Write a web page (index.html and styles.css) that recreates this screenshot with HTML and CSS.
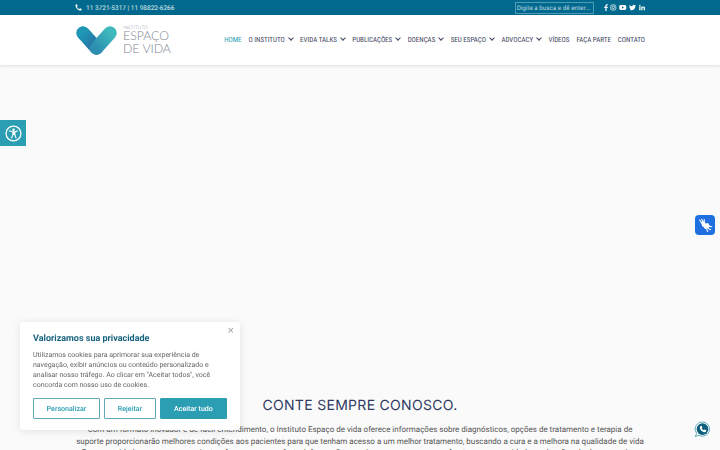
FILE: index.html
```html
<!DOCTYPE html>
<html lang="pt-BR">
<head>
    <meta charset="UTF-8">
    <title>Instituto Espaço de Vida</title>
    <link rel="stylesheet" href="styles.css">
</head>
<body>
    <!-- Top bar -->
    <div class="topbar">
        <div class="container topbar-inner">
            <div class="phone">
                <svg class="phone-icon" viewBox="0 0 24 24"><path fill="#fff" d="M23 17.500l-6-2.800-2.800 3.200c-3.500-1.700-6.400-4.600-8.100-8.100l3.200-2.800L6.500 1 1.500 2.500C1.500 14 10 22.500 21.500 22.500z"/></svg>
                <span>11 3721-5317 | 11 98822-6266</span>
            </div>
            <div class="topbar-right">
                <input class="search" type="text" placeholder="Digite a busca e dê enter...">
                <div class="social">
                    <svg viewBox="0 0 14 24" class="social-f"><path fill="#fff" d="M9 24V13.500h3.700l.6-4.300H9V6.500c0-1.200.5-2.100 2.200-2.100h2.300V.6C12.900.5 11.700.4 10.400.4 7 .4 4.800 2.400 4.800 6v3.200H1v4.300h3.800V24z"/></svg>
                    <svg class="social-ig" viewBox="0 0 24 24"><rect x="2.500" y="2.500" width="19" height="19" rx="5.500" fill="none" stroke="#fff" stroke-width="2.600"/><circle cx="12" cy="12" r="4.500" fill="none" stroke="#fff" stroke-width="2.600"/><circle cx="17.500" cy="6.500" r="1.400" fill="#fff"/></svg>
                    <svg class="social-yt" viewBox="0 0 24 24"><rect x="0" y="3.500" width="24" height="17" rx="5" fill="#fff"/><path fill="#00698d" d="M9.500 8v8l6.500-4z"/></svg>
                    <svg class="social-tw" viewBox="0 0 24 24"><path fill="#fff" d="M23.500 5c-.9.400-1.800.6-2.800.8 1-.6 1.800-1.500 2.100-2.700-.9.600-2 1-3 1.200a4.800 4.800 0 0 0-8.200 4.400C7.700 8.500 4.200 6.600 1.800 3.700.5 5.900 1.200 8.700 3.300 10.100c-.8 0-1.500-.2-2.200-.6 0 2.300 1.600 4.300 3.900 4.800-.7.200-1.500.2-2.200.1.600 1.900 2.400 3.300 4.500 3.300A9.700 9.700 0 0 1 .5 19.700c2.200 1.400 4.700 2.100 7.400 2.100 9 0 14-7.600 13.700-14.300 1-.7 1.800-1.500 1.900-2.500z"/></svg>
                    <svg class="social-in" viewBox="0 0 24 24"><path fill="#fff" d="M1 8h5v15H1zM3.500 1a2.800 2.800 0 1 1 0 5.600 2.800 2.800 0 0 1 0-5.600zM9 8h4.700v2.100C14.400 8.800 16 7.600 18.400 7.600c5 0 5.600 3.200 5.600 7.400v8h-5v-7c0-1.700 0-3.800-2.400-3.800S14 14 14 15.900V23H9z"/></svg>
                </div>
            </div>
        </div>
    </div>

    <!-- Header -->
    <header class="header">
        <div class="container header-inner">
            <a class="logo" href="#">
                <svg class="logo-mark" viewBox="0 0 41 29">
                    <defs>
                        <linearGradient id="band-left" x1="0" y1="0" x2="1" y2="1">
                            <stop offset="0" stop-color="#1f97b4"/>
                            <stop offset="1" stop-color="#2b6aa0"/>
                        </linearGradient>
                        <linearGradient id="band-right" x1="1" y1="0" x2="0" y2="1">
                            <stop offset="0" stop-color="#3fb9bd"/>
                            <stop offset="1" stop-color="#2c8fb0"/>
                        </linearGradient>
                    </defs>
                    <path d="M7 7L20.500 22" fill="none" stroke="url(#band-left)" stroke-width="13.500" stroke-linecap="round"/>
                    <path d="M34 7L20.500 22" fill="none" stroke="url(#band-right)" stroke-width="13.500" stroke-linecap="round"/>
                </svg>
                <div class="logo-text">
                    <span class="logo-small">INSTITUTO</span>
                    <span class="logo-big">ESPAÇO</span>
                    <span class="logo-big">DE VIDA</span>
                </div>
            </a>
            <nav class="nav">
                <a class="nav-link active" href="#">HOME</a>
                <a class="nav-link caret" href="#">O INSTITUTO</a>
                <a class="nav-link caret" href="#">EVIDA TALKS</a>
                <a class="nav-link caret" href="#">PUBLICAÇÕES</a>
                <a class="nav-link caret" href="#">DOENÇAS</a>
                <a class="nav-link caret" href="#">SEU ESPAÇO</a>
                <a class="nav-link caret" href="#">ADVOCACY</a>
                <a class="nav-link" href="#">VÍDEOS</a>
                <a class="nav-link" href="#">FAÇA PARTE</a>
                <a class="nav-link" href="#">CONTATO</a>
            </nav>
        </div>
    </header>

    <!-- Main -->
    <main class="main">
        <div class="hero"></div>
        <section class="about container">
            <h1>CONTE SEMPRE CONOSCO.</h1>
            <p>Com um formato inovador e de fácil entendimento, o Instituto Espaço de vida oferece informações sobre diagnósticos, opções de tratamento e terapia de suporte proporcionarão melhores condições aos pacientes para que tenham acesso a um melhor tratamento, buscando a cura e a melhora na qualidade de vida<br>Para os cuidadores e para os pacientes, fornecemos conforto, informação e apoio, para que possam enfrentar com serenidade os desafios da doença e viver melhor.</p>
        </section>
    </main>

    <!-- Floating widgets -->
    <a class="a11y" href="#">
        <svg viewBox="0 0 24 24"><circle cx="12" cy="12" r="10.500" fill="none" stroke="#fff" stroke-width="1.800"/><circle cx="12" cy="6.800" r="1.800" fill="#fff"/><path fill="#fff" d="M5.500 8.800l.4-1.300 4.300 1.200h3.600l4.300-1.200.4 1.300-3.800 1.300v3.400l1.800 5.200-1.300.5-2-5h-1.400l-2 5-1.300-.5 1.800-5.200v-3.400z"/></svg>
    </a>
    <a class="libras" href="#">
        <svg viewBox="0 0 20 20">
            <g fill="none" stroke="#fff" stroke-linecap="round">
                <path stroke-width="1.300" d="M5 6L3 3.500M7 5.500L5.500 2.500M8.500 5.500V3"/>
                <path stroke-width="1.300" d="M14.500 11l3 .5M13.500 13.500l2.500 1.500M11.500 14.500l1 2.500"/>
            </g>
            <path fill="#fff" d="M4 6.500l4.500-1.500 1.500 2.500 3-.5 2 3-1.500 3.500-4 .5-2-2.500-1.500-.5-.5-2.500z"/>
        </svg>
    </a>
    <a class="whats" href="#">
        <svg viewBox="0 0 20 20"><path fill="#fff" stroke="#1b7f9a" stroke-width=".8" d="M10 1.200a8.300 8.300 0 0 1 0 16.600c-1.500 0-2.900-.4-4.100-1.100l-4.200 1.600 1.300-3.900A8.300 8.300 0 0 1 10 1.200z"/><circle cx="10" cy="9.500" r="6.900" fill="#0f5f7c"/><path fill="#fff" d="M7.800 5.800l1.200-.3.900 2.200-.8.900c.5 1 1.300 1.800 2.300 2.300l.9-.8 2.200.9-.3 1.300c-.4.800-1.500 1.100-2.400.9-2.500-.6-4.300-2.400-4.900-4.900-.2-.9.100-2 .9-2.500z"/></svg>
    </a>

    <!-- Cookie notice -->
    <div class="cookie">
        <button class="cookie-close" type="button">×</button>
        <h2>Valorizamos sua privacidade</h2>
        <p>Utilizamos cookies para aprimorar sua experiência de navegação, exibir anúncios ou conteúdo personalizado e analisar nosso tráfego. Ao clicar em "Aceitar todos", você concorda com nosso uso de cookies.</p>
        <div class="cookie-buttons">
            <button class="btn btn-custom" type="button">Personalizar</button>
            <button class="btn btn-reject" type="button">Rejeitar</button>
            <button class="btn btn-accept" type="button">Aceitar tudo</button>
        </div>
    </div>
</body>
</html>
```

FILE: styles.css
```css
* {
    box-sizing: border-box;
    margin: 0;
    padding: 0;
}

html, body {
    height: 100%;
    overflow: hidden;
}

body {
    font-family: Roboto, Arial, sans-serif;
    background-color: #fafafa;
    color: #555;
    text-rendering: geometricPrecision;
}

a {
    text-decoration: none;
}

.container {
    width: 570px;
    margin: 0 auto;
}

/* Top bar */
.topbar {
    height: 15px;
    background-color: #00698d;
    color: #fff;
}

.topbar-inner {
    height: 15px;
    display: flex;
    justify-content: space-between;
    align-items: center;
}

.phone {
    display: flex;
    align-items: center;
    font-size: 6.500px;
    color: #e3eff3;
}

.phone-icon {
    width: 7px;
    height: 7px;
    margin-right: 4px;
}

.topbar-right {
    display: flex;
    align-items: center;
}

.search {
    width: 79px;
    height: 12px;
    padding: 0 1px;
    font-family: Roboto, Arial, sans-serif;
    font-size: 6.300px;
    color: #fff;
    background: transparent;
    border: 1px solid #4f9db8;
    text-rendering: geometricPrecision;
}

.search::placeholder {
    color: #bcd8e2;
    opacity: 1;
}

.social {
    display: flex;
    align-items: center;
    gap: 2.600px;
    margin-left: 10px;
}

.social svg {
    height: 7px;
}

.social .social-f {
    width: 4px;
}

.social .social-ig {
    width: 6.500px;
}

.social .social-yt {
    width: 7.500px;
}

.social .social-tw {
    width: 7px;
}

.social .social-in {
    width: 6px;
}

/* Header */
.header {
    height: 50px;
    background-color: #fff;
    box-shadow: 0 1px 3px rgba(0, 0, 0, 0.12);
    position: relative;
}

.header-inner {
    height: 50px;
    display: flex;
    justify-content: space-between;
    align-items: center;
}

.logo {
    display: flex;
    align-items: center;
    flex-shrink: 0;
    color: #7a8490;
}

.logo-mark {
    width: 43px;
    height: 29px;
}

.logo-text {
    display: flex;
    flex-direction: column;
    margin-left: 5px;
    font-family: Lato, Arial, sans-serif;
    font-weight: 300;
    white-space: nowrap;
}

.logo-small {
    font-size: 4.600px;
    line-height: 5px;
    letter-spacing: 0.2px;
}

.logo-big {
    font-size: 12.300px;
    line-height: 12.500px;
}

.nav {
    display: flex;
    align-items: center;
    gap: 7px;
}

.nav-link {
    font-family: Roboto, sans-serif;
    font-stretch: condensed;
    font-size: 7px;
    color: #3d4460;
    white-space: nowrap;
}

.nav-link.active {
    color: #2b9eb3;
}

.nav-link.caret::after {
    content: "";
    display: inline-block;
    width: 3px;
    height: 3px;
    margin-left: 4px;
    margin-right: 0.400px;
    border-right: 1.200px solid #3d4460;
    border-bottom: 1.200px solid #3d4460;
    transform: translateY(-2px) rotate(45deg);
}

/* Main */
.hero {
    height: 332px;
}

.about {
    text-align: center;
}

.about h1 {
    font-family: Inter, Arial, sans-serif;
    font-size: 14px;
    font-weight: 400;
    letter-spacing: 0.3px;
    line-height: 16px;
    color: #2f3a63;
    margin-top: 1px;
    margin-bottom: 10px;
}

.about p {
    font-size: 8px;
    line-height: 11.700px;
    color: #555;
}

/* Floating widgets */
.a11y {
    position: fixed;
    left: 0;
    top: 120px;
    width: 26px;
    height: 26px;
    background-color: #2b9eb3;
    display: flex;
    align-items: center;
    justify-content: center;
}

.a11y svg {
    width: 17px;
    height: 17px;
}

.libras {
    position: fixed;
    right: 5px;
    top: 215px;
    width: 20px;
    height: 20px;
    border-radius: 4px;
    background-color: #1f6fe0;
    display: flex;
    align-items: center;
    justify-content: center;
}

.libras svg {
    width: 17px;
    height: 17px;
}

.whats {
    position: fixed;
    left: 694px;
    top: 421px;
    width: 17px;
    height: 17px;
}

.whats svg {
    width: 17px;
    height: 17px;
    display: block;
}

/* Cookie notice */
.cookie {
    position: fixed;
    left: 20px;
    top: 322px;
    width: 220px;
    height: 108px;
    padding: 11px 13px;
    background-color: #fff;
    border-radius: 3px;
    box-shadow: 0 1px 8px rgba(0, 0, 0, 0.1);
}

.cookie-close {
    position: absolute;
    top: 3px;
    right: 6px;
    border: none;
    background: none;
    font-size: 11px;
    line-height: 11px;
    color: #999;
}

.cookie h2 {
    font-size: 9px;
    font-weight: 700;
    line-height: 12px;
    color: #17637f;
    margin-bottom: 6px;
}

.cookie p {
    font-size: 7px;
    line-height: 9.900px;
    color: #666;
    margin-bottom: 7px;
}

.cookie-buttons {
    display: flex;
    gap: 4px;
}

.btn {
    height: 21.500px;
    font-family: Roboto, Arial, sans-serif;
    font-size: 7.100px;
    font-weight: 500;
    border-radius: 1px;
    border: 1.500px solid #5fa9b8;
    text-rendering: geometricPrecision;
}

.btn-custom {
    width: 67px;
    color: #2b9eb3;
    background: #fff;
}

.btn-reject {
    width: 52px;
    color: #2b9eb3;
    background: #fff;
}

.btn-accept {
    width: 67px;
    color: #fff;
    background: #2b9eb3;
    border-color: #2b9eb3;
}
```
